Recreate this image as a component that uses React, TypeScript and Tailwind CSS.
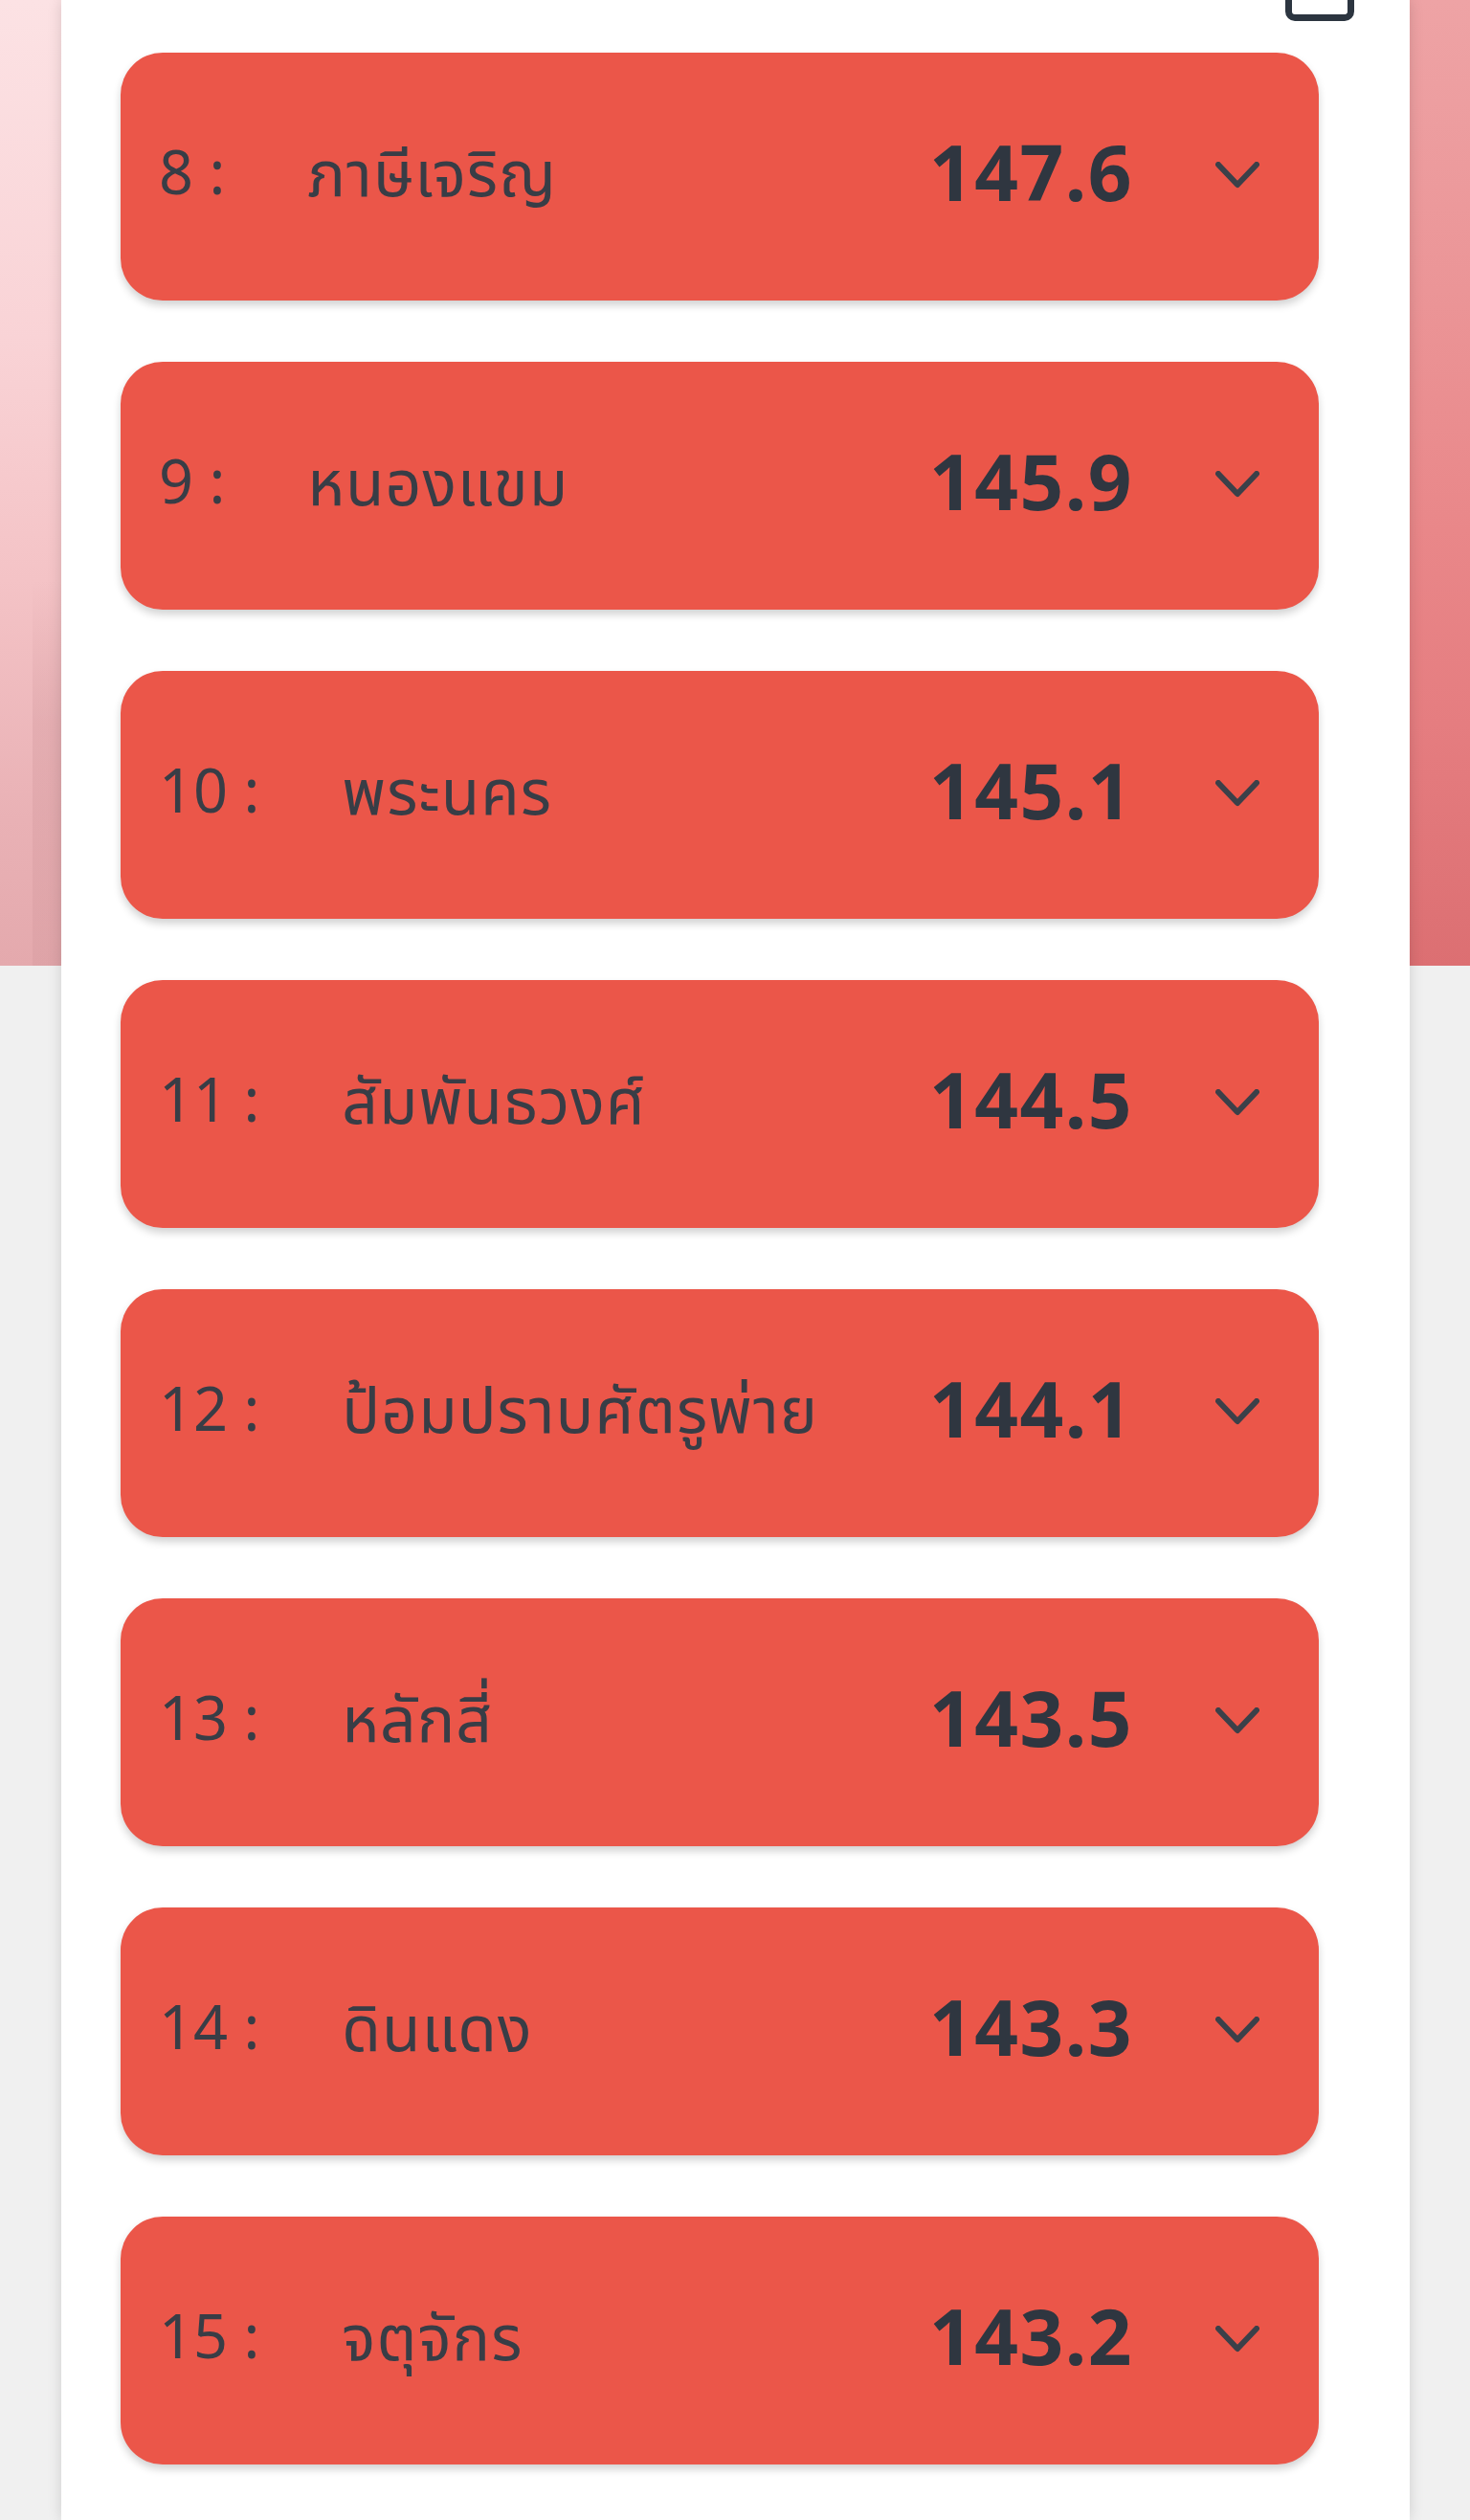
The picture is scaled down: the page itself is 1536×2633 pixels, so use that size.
import React from "react";

const rows = [
  { n: 8, name: "ภาษีเจริญ", v: "147.6" },
  { n: 9, name: "หนองแขม", v: "145.9" },
  { n: 10, name: "พระนคร", v: "145.1" },
  { n: 11, name: "สัมพันธวงศ์", v: "144.5" },
  { n: 12, name: "ป้อมปราบศัตรูพ่าย", v: "144.1" },
  { n: 13, name: "หลักสี่", v: "143.5" },
  { n: 14, name: "ดินแดง", v: "143.3" },
  { n: 15, name: "จตุจักร", v: "143.2" },
];

const font = {
  fontFamily: '"Noto Sans", "Noto Sans Thai", "Noto Sans Thai UI", "Open Sans", sans-serif',
};

function Chevron() {
  return (
    <svg width="46" height="28" viewBox="0 0 46 28" fill="none" className="shrink-0">
      <polyline
        points="3,3 23,24 43,3"
        stroke="#3b4049"
        strokeWidth="6"
        strokeLinecap="round"
        strokeLinejoin="round"
      />
    </svg>
  );
}

function Card({ n, name, v }: { n: number; name: string; v: string }) {
  return (
    <div className="h-[259px] rounded-[44px] bg-[#eb5649] shadow-[0_5px_8px_rgba(0,0,0,0.18)] flex items-center pl-[40px] pr-[62px] pb-[12px]">
      <div className="flex items-center flex-1 min-w-0">
        <span className="text-[63px] leading-none text-[#383d46] whitespace-pre">{`${n} :`}</span>
        <span className="ml-[86px] text-[66px] leading-none text-[#383d46] whitespace-nowrap tracking-[1px]">{name}</span>
      </div>
      <span className="text-[80px] leading-none font-bold text-[#2f3640] tracking-[1.5px]">{v}</span>
      <div className="ml-[86px] mt-[8px]">
        <Chevron />
      </div>
    </div>
  );
}

export default function App() {
  return (
    <div className="min-h-screen bg-[#f0f0f0] grid grid-cols-[64px_1fr_63px]" style={font}>
      <div>
        <div className="h-[1009px] bg-[linear-gradient(to_bottom,#fce2e4_0%,#f9d3d6_35%,#f4c3c6_60%,#e9b1b5_85%,#e4a9ad_100%)] flex justify-end">
          <div className="w-[30px] h-full bg-[linear-gradient(to_bottom,transparent_0%,transparent_60%,rgba(200,140,145,0.25)_75%,rgba(200,140,145,0.2)_100%)]" />
        </div>
      </div>
      <div className="relative z-10 bg-white shadow-[0_0_14px_rgba(0,0,0,0.14)] pl-[62px] pr-[95px] pb-[58px]">
        <div className="h-[55px] flex justify-end items-start">
          <div className="mr-[-37px] w-[72px] h-[22px] border-[7px] border-t-0 border-[#2c3540] rounded-b-[10px]" />
        </div>
        <div className="flex flex-col gap-[64px]">
          {rows.map((r) => (
            <Card key={r.n} {...r} />
          ))}
        </div>
      </div>
      <div>
        <div className="h-[1009px] bg-[linear-gradient(to_bottom,#eea3a5_0%,#eb9597_30%,#e98789_55%,#e57d80_75%,#dc6f72_100%)]" />
      </div>
    </div>
  );
}
